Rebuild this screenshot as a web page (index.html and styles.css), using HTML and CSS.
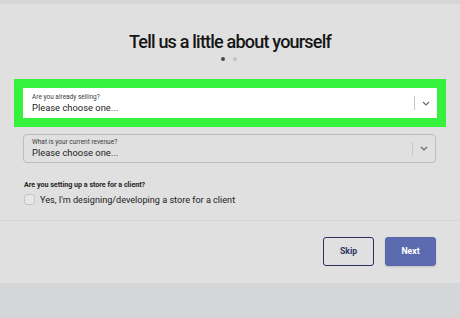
FILE: index.html
```html
<!DOCTYPE html>
<html>
<head>
<meta charset="utf-8">
<link rel="stylesheet" href="styles.css">
</head>
<body>
<div class="strip"></div>
<div class="panel">
  <div class="form">
    <h1 class="title">Tell us a little about yourself</h1>
    <div class="dots"><span class="dot on"></span><span class="dot"></span></div>
    <div class="highlight">
      <div class="select white">
        <div class="sel-text">
          <div class="sel-label">Are you already selling?</div>
          <div class="sel-value">Please choose one...</div>
        </div>
        <div class="sel-arrow">
          <svg width="8" height="5" viewBox="0 0 8 5"><path d="M1 1 L4 4 L7 1" fill="none" stroke="#666" stroke-width="1.1"/></svg>
        </div>
      </div>
    </div>
    <div class="select plain">
      <div class="sel-text">
        <div class="sel-label">What is your current revenue?</div>
        <div class="sel-value">Please choose one...</div>
      </div>
      <div class="sel-arrow">
        <svg width="8" height="5" viewBox="0 0 8 5"><path d="M1 1 L4 4 L7 1" fill="none" stroke="#666" stroke-width="1.1"/></svg>
      </div>
    </div>
    <div class="question">Are you setting up a store for a client?</div>
    <label class="check-row"><span class="checkbox"></span><span class="check-text">Yes, I'm designing/developing a store for a client</span></label>
  </div>
  <div class="footer">
    <button class="btn skip">Skip</button>
    <button class="btn next">Next</button>
  </div>
</div>
</body>
</html>
```
FILE: styles.css
```css
* { box-sizing: border-box; }
html, body { margin: 0; padding: 0; }
body {
  background: #d5d6d8;
  font-family: "Roboto", "Liberation Sans", Arial, sans-serif;
  color: #212121;
  width: 460px;
  height: 318px;
  overflow: hidden;
}
.strip { height: 4px; background: #d6d6d8; }
.panel { background: #e0e0e0; height: 279px; display: flex; flex-direction: column; }
.form {
  height: 217px;
  border-bottom: 1px solid #d6d6d6;
  display: flex;
  flex-direction: column;
  padding-top: 27px;
}
.title {
  margin: 0;
  text-align: center;
  font-family: "Roboto", sans-serif;
  font-weight: 500;
  font-size: 18px;
  line-height: 22px;
  letter-spacing: -0.8px;
  color: #151515;
}
.dots { display: flex; justify-content: center; gap: 8px; margin-top: 4px; height: 4px; padding-right: 2px; }
.dot { width: 4px; height: 4px; border-radius: 50%; background: #c3c3c5; }
.dot.on { background: #4a4a4c; }
.highlight {
  margin: 18px 14px 0 14px;
  border: 9px solid #37f23c;
  background: #37f23c;
}
.select {
  display: flex;
  align-items: center;
  justify-content: space-between;
}
.select.white { background: #fff; height: 30px; padding-left: 9px; }
.select.plain {
  margin: 7px 24px 0 23px;
  height: 29px;
  border: 1px solid #bdbdbd;
  border-radius: 4px;
  padding-left: 8px;
}
.sel-text { display: flex; flex-direction: column; }
.sel-label { font-size: 6.5px; line-height: 8px; color: #3a3a3a; }
.sel-value { font-size: 9.4px; line-height: 12px; color: #1d1d1d; margin-top: 1px; }
.sel-arrow {
  width: 23px;
  height: 14px;
  border-left: 1px solid #c8c8c8;
  display: flex;
  align-items: center;
  justify-content: center;
}
.question {
  margin: 17px 0 0 24px;
  font-size: 7.1px;
  font-weight: bold;
  line-height: 9px;
  color: #1e1e1e;
}
.check-row { display: flex; align-items: center; margin: 5px 0 0 24px; }
.checkbox {
  width: 11px; height: 11px;
  border: 1px solid #c6c6c6;
  border-radius: 3px;
  background: #e6e6e6;
}
.check-text { margin-left: 5px; font-size: 9.1px; color: #222; }
.footer {
  flex: 1;
  display: flex;
  justify-content: flex-end;
  align-items: center;
  gap: 11px;
  padding-right: 24px;
  padding-bottom: 2px;
}
.btn {
  width: 51px;
  height: 29px;
  border-radius: 3px;
  font-family: "Roboto", sans-serif;
  font-weight: 700;
  font-size: 8.7px;
  padding: 0;
}
.skip { background: transparent; border: 1.5px solid #2b2f5c; color: #2f3566; }
.next { background: #5c6bb0; border: 1px solid #5866aa; color: #fff; box-shadow: 0 1px 2px rgba(0,0,0,0.15); }
```
